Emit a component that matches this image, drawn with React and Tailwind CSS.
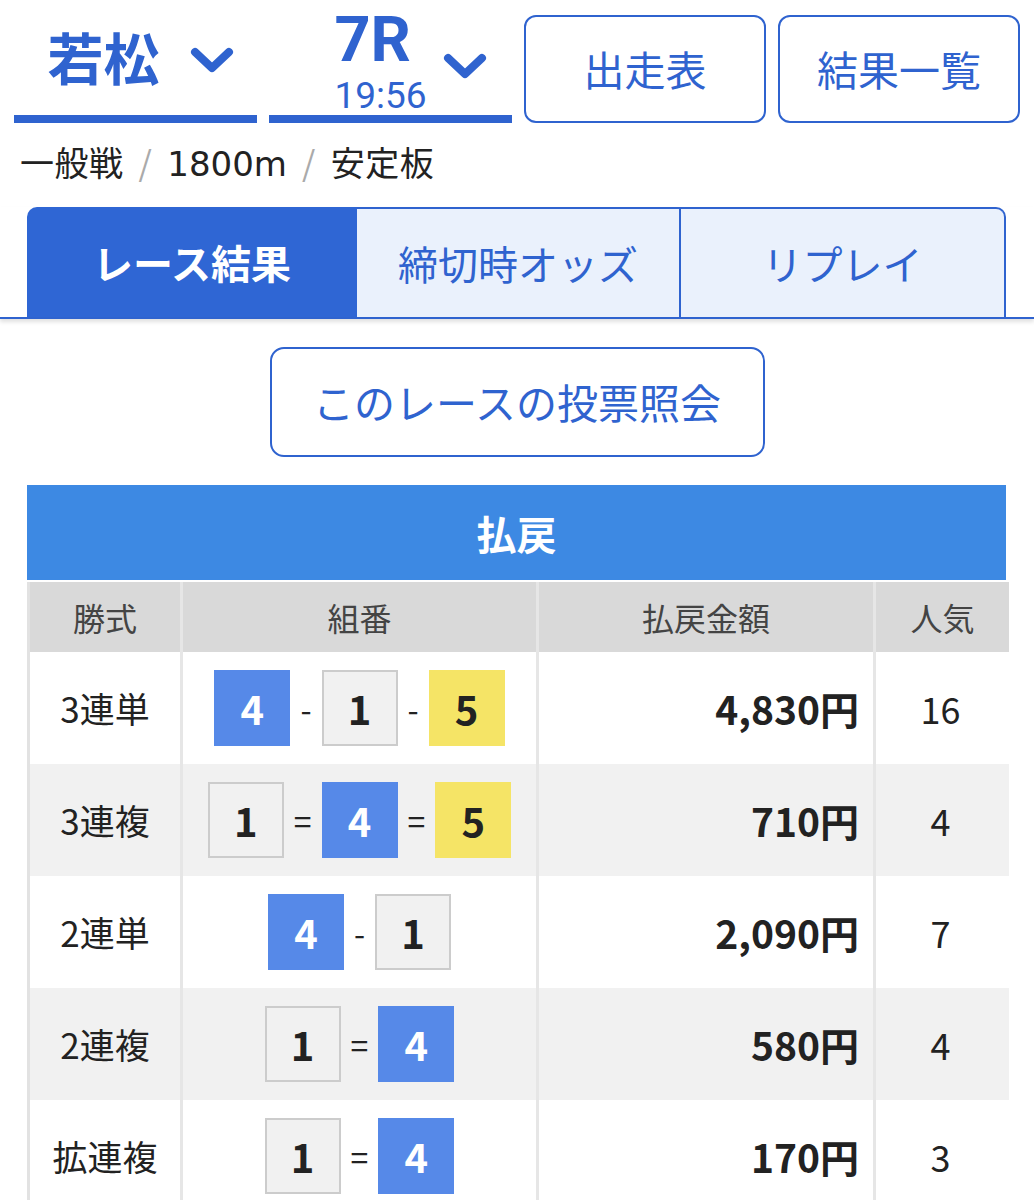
import React from 'react';

const FONT = { fontFamily: '"Noto Sans CJK JP", "Noto Sans", sans-serif' };

// payout rows
const payouts = [
  { type: '3連単', nums: [4, 1, 5], sep: '-', amount: '4,830円', pop: '16' },
  { type: '3連複', nums: [1, 4, 5], sep: '=', amount: '710円', pop: '4' },
  { type: '2連単', nums: [4, 1], sep: '-', amount: '2,090円', pop: '7' },
  { type: '2連複', nums: [1, 4], sep: '=', amount: '580円', pop: '4' },
  { type: '拡連複', nums: [1, 4], sep: '=', amount: '170円', pop: '3' },
];

const Chevron = ({ className = '' }) => (
  <svg width="44" height="30" viewBox="0 0 44 30" className={`shrink-0 ${className}`}>
    <path d="M5 6 L22 22 L39 6" fill="none" stroke="#2f63cf" strokeWidth="8" strokeLinecap="round" strokeLinejoin="round" />
  </svg>
);

const NumBox = ({ n }) => {
  if (n === 4) {
    return (
      <div className="w-[76px] h-[76px] flex items-center justify-center bg-[#5689e8] text-white text-[40px] font-bold">
        {n}
      </div>
    );
  }
  if (n === 5) {
    return (
      <div className="w-[76px] h-[76px] flex items-center justify-center bg-[#f5e466] text-[#222] text-[40px] font-bold">
        {n}
      </div>
    );
  }
  return (
    <div className="w-[76px] h-[76px] flex items-center justify-center bg-[#f1f1f1] border-2 border-[#cccccc] text-[#222] text-[40px] font-bold">
      {n}
    </div>
  );
};

export default function App() {
  return (
    <div className="w-[1034px] min-h-[1200px] bg-white text-[#222] overflow-hidden" style={FONT}>
      {/* top selectors */}
      <div className="flex px-[14px] gap-[12px]">
        <div className="w-[243px] h-[123px] border-b-[8px] border-[#2f63cf] flex items-center justify-center gap-[30px] pl-[10px] pb-[4px]">
          <span className="text-[56px] font-bold text-[#2f63cf] leading-none">若松</span>
          <Chevron className="mt-[10px]" />
        </div>
        <div className="w-[243px] h-[123px] border-b-[8px] border-[#2f63cf] flex items-start justify-center gap-[16px] pl-[40px]">
          <div className="flex flex-col items-start text-[#2f63cf] pt-[10px] font-['Roboto']">
            <span className="text-[63px] font-bold leading-[60px]">7R</span>
            <span className="text-[37px] leading-[36px] mt-[8px]">19:56</span>
          </div>
          <Chevron className="mt-[52px]" />
        </div>
        <div className="w-[242px] h-[108px] mt-[15px] border-2 border-[#2f63cf] rounded-[12px] flex items-center justify-center text-[41px] text-[#2f63cf]">
          出走表
        </div>
        <div className="w-[242px] h-[108px] mt-[15px] border-2 border-[#2f63cf] rounded-[12px] flex items-center justify-center text-[41px] text-[#2f63cf]">
          結果一覧
        </div>
      </div>

      {/* race info */}
      <div className="px-[20px] pt-[16px] text-[34px] leading-[46px] text-[#222] tracking-[0.5px]">
        一般戦<span className="text-[#aaa] mx-[15px]">/</span><span className="font-['DejaVu_Sans'] tracking-normal">1800m</span><span className="text-[#aaa] mx-[15px]">/</span>安定板
      </div>

      {/* tabs */}
      <div className="mt-[20px] border-b-2 border-[#2f63cf] shadow-[0_3px_4px_rgba(0,0,0,0.12)]">
        <div className="ml-[27px] w-[979px] h-[110px] flex">
          <div className="w-[330px] bg-[#2f66d4] rounded-tl-[10px] flex items-center justify-center text-white text-[40px] font-bold">
            レース結果
          </div>
          <div className="w-[324px] bg-[#eaf1fc] border-t-2 border-r-2 border-[#2f63cf] flex items-center justify-center text-[#2f63cf] text-[40px]">
            締切時オッズ
          </div>
          <div className="flex-1 bg-[#eaf1fc] border-t-2 border-r-2 border-[#2f63cf] rounded-tr-[10px] flex items-center justify-center text-[#2f63cf] text-[40px]">
            リプレイ
          </div>
        </div>
      </div>

      {/* vote inquiry button */}
      <div className="flex justify-center pt-[28px]">
        <div className="w-[495px] h-[110px] border-2 border-[#2f63cf] rounded-[14px] flex items-center justify-center text-[41px] text-[#2f63cf]">
          このレースの投票照会
        </div>
      </div>

      {/* payout table */}
      <div className="ml-[27px] mt-[28px] w-[979px]">
        <div className="h-[95px] bg-[#3d89e3] flex items-center justify-center text-white text-[40px] font-bold">
          払戻
        </div>
        <div className="grid grid-cols-[153px_356px_337px_133px] border-x-[3px] border-[#e2e2e2] mt-[2px]">
          {['勝式', '組番', '払戻金額', '人気'].map((h, i) => (
            <div
              key={h}
              className={`h-[70px] bg-[#d9d9d9] flex items-center justify-center text-[32px] text-[#444] ${i < 3 ? 'border-r-[3px] border-[#e6e6e6]' : ''}`}
            >
              {h}
            </div>
          ))}
          {payouts.map((row, r) => {
            const bg = r % 2 === 0 ? 'bg-white' : 'bg-[#f1f1f1]';
            return (
              <React.Fragment key={row.type}>
                <div className={`h-[112px] ${bg} border-r-[3px] border-[#e6e6e6] flex items-center justify-center text-[35px]`}>
                  {row.type}
                </div>
                <div className={`h-[112px] ${bg} border-r-[3px] border-[#e6e6e6] flex items-center justify-center gap-[10px]`}>
                  {row.nums.map((n, i) => (
                    <React.Fragment key={i}>
                      {i > 0 && <span className="text-[32px] text-[#222] leading-none">{row.sep}</span>}
                      <NumBox n={n} />
                    </React.Fragment>
                  ))}
                </div>
                <div className={`h-[112px] ${bg} border-r-[3px] border-[#e6e6e6] flex items-center justify-end pr-[14px] text-[39px] font-bold`}>
                  {row.amount}
                </div>
                <div className={`h-[112px] ${bg} flex items-center justify-center text-[36px] pr-[4px]`}>
                  {row.pop}
                </div>
              </React.Fragment>
            );
          })}
        </div>
      </div>
    </div>
  );
}
